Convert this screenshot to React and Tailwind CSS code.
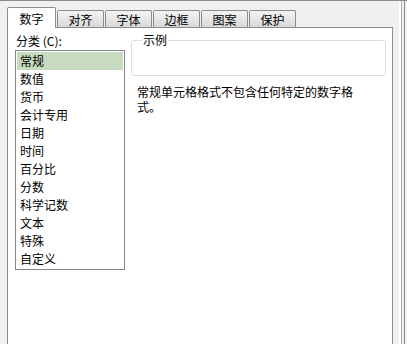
import React from 'react';

const TABS = ['数字', '对齐', '字体', '边框', '图案', '保护'];

const CATEGORIES = [
  '常规', '数值', '货币', '会计专用', '日期', '时间',
  '百分比', '分数', '科学记数', '文本', '特殊', '自定义',
];

export default function App() {
  const selected = 0;

  return (
    <div className="flex h-[344px] w-[407px] overflow-hidden border-t border-[#8c8c8c] bg-[#f0f0f0] font-['Noto_Sans_CJK_SC',sans-serif] text-[12px] text-black">
      {/* Dialog body */}
      <div className="flex w-[393px] flex-col pl-[7px]">
        {/* Tab strip */}
        <div className="relative z-10 flex h-[26px] items-end">
          {TABS.map((tab, i) =>
            i === selected ? (
              <div
                key={tab}
                className="-mb-px flex h-[21px] w-[49px] items-center justify-center rounded-t-[2px] border border-b-0 border-[#898c95] bg-white pt-[1px]"
              >
                {tab}
              </div>
            ) : (
              <div
                key={tab}
                className="ml-px flex h-[17px] w-[47px] items-center justify-center rounded-t-[2px] border border-b-0 border-[#898c95] bg-linear-to-b from-[#f3f3f3] to-[#d9d9d9] pt-[2px] leading-none"
              >
                {tab}
              </div>
            )
          )}
        </div>

        {/* Tab page */}
        <div className="flex flex-1 border-x border-t border-[#898c95] bg-white pl-[7px]">
          {/* Category list */}
          <div className="flex flex-col pt-[6px]">
            <div className="ml-px h-[14px] leading-[14px]">分类 (C):</div>
            <div className="mt-[2px] w-[110px] border border-[#828790] p-px">
              {CATEGORIES.map((c, i) => (
                <div
                  key={c}
                  className={`h-[18px] pl-[3px] leading-[18px] ${i === selected ? 'bg-[#c7dbbf]' : ''}`}
                >
                  {c}
                </div>
              ))}
            </div>
          </div>

          {/* Sample + description */}
          <div className="ml-[6px] flex flex-col pt-[12px]">
            <div className="relative h-[36px] w-[255px] rounded-[3px] border border-[#d5dfe5]">
              <span className="absolute -top-[8px] left-[10px] bg-white px-px leading-[14px]">示例</span>
            </div>
            <p className="ml-[6px] mt-[8px] w-[225px] leading-[15px]">
              常规单元格格式不包含任何特定的数字格式。
            </p>
          </div>
        </div>
      </div>

      {/* Right frame edge */}
      <div className="flex flex-1">
        <div className="w-[6px]" />
        <div className="w-[2px] bg-white" />
        <div className="w-px bg-[#a9a9a9]" />
        <div className="w-[2px]" />
        <div className="w-px bg-[#8a8a8a]" />
      </div>
    </div>
  );
}
